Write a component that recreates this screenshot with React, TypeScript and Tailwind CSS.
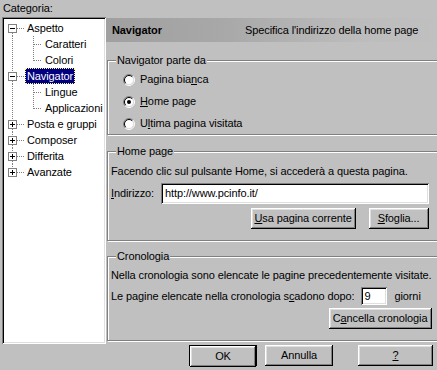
import React from 'react';

const raised =
  'bg-[#c0c0c0] shadow-[inset_-1px_-1px_0_#000,inset_1px_1px_0_#fff,inset_-2px_-2px_0_#808080,inset_2px_2px_0_#dfdfdf]';
const sunken =
  'bg-white shadow-[inset_1px_1px_0_#808080,inset_-1px_-1px_0_#fff,inset_2px_2px_0_#000,inset_-2px_-2px_0_#dfdfdf]';

function U({ children }: { children: React.ReactNode }) {
  return <span className="underline underline-offset-[1px]">{children}</span>;
}

type Row = {
  label: string;
  level: 0 | 1;
  expander?: 'plus' | 'minus';
  first?: boolean;
  last?: boolean;
  lastChild?: boolean;
  selected?: boolean;
};

const rows: Row[] = [
  { label: 'Aspetto', level: 0, expander: 'minus', first: true },
  { label: 'Caratteri', level: 1 },
  { label: 'Colori', level: 1, lastChild: true },
  { label: 'Navigator', level: 0, expander: 'minus', selected: true },
  { label: 'Lingue', level: 1 },
  { label: 'Applicazioni', level: 1, lastChild: true },
  { label: 'Posta e gruppi', level: 0, expander: 'plus' },
  { label: 'Composer', level: 0, expander: 'plus' },
  { label: 'Differita', level: 0, expander: 'plus' },
  { label: 'Avanzate', level: 0, expander: 'plus', last: true },
];

function TreeLines({ row }: { row: Row }) {
  const dot = { stroke: '#808080', strokeDasharray: '1 1', shapeRendering: 'crispEdges' as const };
  if (row.level === 0) {
    return (
      <svg width="21" height="16" className="shrink-0">
        {!row.first && <line x1="8.5" y1="0" x2="8.5" y2="3" {...dot} />}
        {!row.last && <line x1="8.5" y1="13" x2="8.5" y2="16" {...dot} />}
        <line x1="13" y1="8.5" x2="20" y2="8.5" {...dot} />
        <rect x="4.5" y="4.5" width="8" height="8" fill="#fff" stroke="#808080" shapeRendering="crispEdges" />
        <line x1="6" y1="8.5" x2="11" y2="8.5" stroke="#000" shapeRendering="crispEdges" />
        {row.expander === 'plus' && (
          <line x1="8.5" y1="6" x2="8.5" y2="11" stroke="#000" shapeRendering="crispEdges" />
        )}
      </svg>
    );
  }
  return (
    <svg width="39" height="16" className="shrink-0">
      <line x1="8.5" y1="0" x2="8.5" y2="16" {...dot} />
      <line x1="29.5" y1="0" x2="29.5" y2={row.lastChild ? 9 : 16} {...dot} />
      <line x1="30" y1="8.5" x2="38" y2="8.5" {...dot} />
    </svg>
  );
}

function Radio({ checked }: { checked?: boolean }) {
  return (
    <svg width="12" height="12" className="shrink-0">
      <circle cx="6" cy="6" r="4.5" fill="#fff" />
      <path d="M2.1 9.9 A5.5 5.5 0 0 1 9.9 2.1" fill="none" stroke="#808080" />
      <path d="M9.9 2.1 A5.5 5.5 0 0 1 2.1 9.9" fill="none" stroke="#fff" />
      <path d="M2.8 9.2 A4.5 4.5 0 0 1 9.2 2.8" fill="none" stroke="#000" />
      <path d="M9.2 2.8 A4.5 4.5 0 0 1 2.8 9.2" fill="none" stroke="#dfdfdf" />
      {checked && <circle cx="6" cy="6" r="2" fill="#000" />}
    </svg>
  );
}

function Group({ title, className, children }: { title: string; className: string; children: React.ReactNode }) {
  return (
    <div className={`relative border border-[#808080] shadow-[inset_1px_1px_0_#fff,1px_1px_0_#fff] ${className}`}>
      <span className="absolute left-[8px] top-[-8px] bg-[#c0c0c0] px-[1px] leading-[14px]">{title}</span>
      {children}
    </div>
  );
}

function Button({ children, className }: { children: React.ReactNode; className: string }) {
  return (
    <div className={`flex items-center justify-center h-[21px] whitespace-nowrap ${raised} ${className}`}>{children}</div>
  );
}

export default function App() {
  return (
    <div
      className="w-[437px] h-[370px] bg-[#c0c0c0] text-black text-[11px] leading-[13px] tracking-[-0.1px] overflow-hidden"
      style={{ fontFamily: '"Liberation Sans", Arial, sans-serif' }}
    >
      <div className="flex h-[345px]">
        {/* Categories */}
        <div className="w-[109px] pl-[2px] flex flex-col">
          <div className="h-[17px] pl-[1px] pt-[2px] leading-[13px]">Categoria:</div>
          <div className={`w-[104px] h-[327px] pt-[3px] pl-[2px] ${sunken}`}>
            {rows.map((row) => (
              <div key={row.label} className="flex items-center h-[16px] whitespace-nowrap">
                <TreeLines row={row} />
                <span
                  className={
                    row.selected
                      ? 'bg-[#000080] text-white px-[1px] h-[16px] leading-[14px] border border-dotted border-[#ffff80]'
                      : 'px-[2px] leading-[14px]'
                  }
                >
                  {row.label}
                </span>
              </div>
            ))}
          </div>
        </div>

        {/* Panel */}
        <div className="flex-1 pt-[18px] pr-[2px] flex flex-col">
          <div className="h-[24px] mr-[1px] flex items-center bg-[linear-gradient(90deg,#a0a0a0_0%,#a8a8a8_35%,#bcbcbc_75%,#c0c0c0_100%)]">
            <span className="w-[139px] pl-[6px] font-bold">Navigator</span>
            <span>Specifica l'indirizzo della home page</span>
          </div>

          <Group title="Navigator parte da" className="mt-[18px] ml-[1px] h-[75px] pt-[12px] pl-[15px] flex flex-col gap-[9px]">
            <div className="flex items-center gap-[5px]">
              <Radio />
              <span>Pagina bia<U>n</U>ca</span>
            </div>
            <div className="flex items-center gap-[5px]">
              <Radio checked />
              <span><U>H</U>ome page</span>
            </div>
            <div className="flex items-center gap-[5px]">
              <Radio />
              <span>U<U>l</U>tima pagina visitata</span>
            </div>
          </Group>

          <Group title="Home page" className="mt-[16px] ml-[1px] h-[90px] pt-[13px] pl-[3px] pr-[11px] flex flex-col">
            <div className="whitespace-nowrap">Facendo clic sul pulsante Home, si accederà a questa pagina.</div>
            <div className="flex items-center mt-[5px]">
              <span className="w-[50px]"><U>I</U>ndirizzo:</span>
              <div className={`flex-1 h-[21px] flex items-center pl-[4px] ${sunken}`}>http://www.pcinfo.it/</div>
            </div>
            <div className="flex justify-end gap-[13px] mt-[4px]">
              <Button className="w-[105px]"><U>U</U>sa pagina corrente</Button>
              <Button className="w-[60px]"><U>S</U>foglia...</Button>
            </div>
          </Group>

          <Group title="Cronologia" className="mt-[15px] ml-[1px] h-[85px] pt-[12px] pl-[3px] pr-[8px] flex flex-col">
            <div className="whitespace-nowrap">Nella cronologia sono elencate le pagine precedentemente visitate.</div>
            <div className="flex items-center mt-[5px] whitespace-nowrap">
              <span>Le pagine elencate nella cronologia s<U>c</U>adono dopo:</span>
              <div className={`w-[26px] h-[18px] ml-[7px] flex items-center pl-[3px] ${sunken}`}>9</div>
              <span className="ml-[7px]">giorni</span>
            </div>
            <div className="flex justify-end mt-[3px]">
              <Button className="w-[103px]">C<U>a</U>ncella cronologia</Button>
            </div>
          </Group>
        </div>
      </div>

      {/* Dialog buttons */}
      <div className="flex items-start pl-[189px] gap-[8px]">
        <div className="w-[68px] h-[21px] border border-black">
          <Button className="h-[19px] w-full">OK</Button>
        </div>
        <Button className="w-[68px]">Annulla</Button>
        <Button className="w-[75px] ml-[17px]"><U>?</U></Button>
      </div>
    </div>
  );
}
